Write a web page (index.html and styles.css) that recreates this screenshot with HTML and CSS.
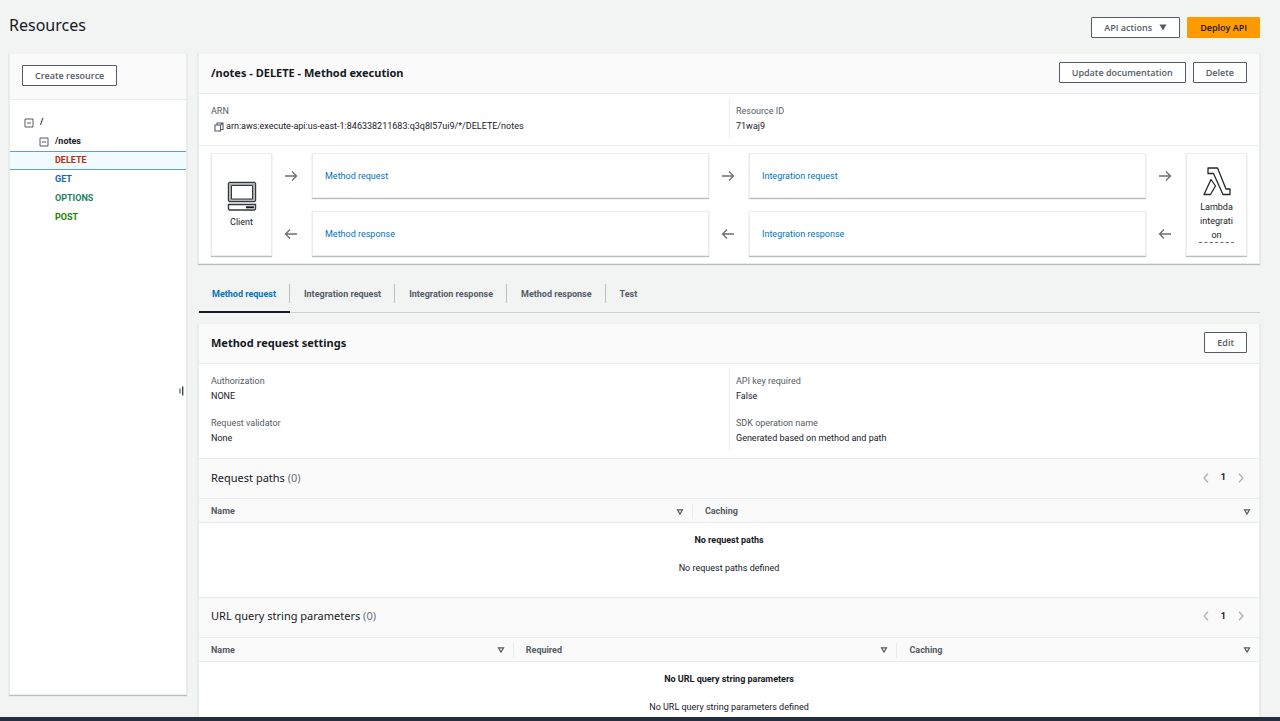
FILE: index.html
```html
<!DOCTYPE html>
<html lang="en">
<head>
<meta charset="utf-8">
<title>Resources</title>
<link rel="stylesheet" href="styles.css">
</head>
<body>
<svg class="defs" aria-hidden="true">
  <symbol id="minus-box" viewBox="0 0 10 10"><path d="M1 1h8v8H1zM3 5h4" fill="none" stroke="#545b64"/></symbol>
  <symbol id="arrow" viewBox="0 0 14 12"><path d="M1 6h11.500M8 1.500L12.500 6 8 10.500" fill="none" stroke="#6b7075" stroke-width="1.300"/></symbol>
  <symbol id="sort" viewBox="0 0 8 8"><path d="M1.500 1.800h5L4 6z" fill="none" stroke="#545b64" stroke-width="1.200"/></symbol>
  <symbol id="chevron" viewBox="0 0 8 10"><path d="M6 .7L2 5l4 4.300" fill="none" stroke="#aab0b5" stroke-width="1.300"/></symbol>
</svg>
<div class="app">
  <header class="page-header">
    <h1>Resources</h1>
    <div class="actions">
      <button class="btn">API actions <svg class="caret" viewBox="0 0 8 7"><path d="M.5.500h7L4 6.500z" fill="#545b64"/></svg></button>
      <button class="btn primary">Deploy API</button>
    </div>
  </header>
  <div class="columns">
    <aside class="card sidebar">
      <div class="sidebar-head"><button class="btn">Create resource</button></div>
      <ul class="tree">
        <li class="root"><button class="toggle" aria-label="Collapse /"><svg><use href="#minus-box"/></svg></button><span>/</span></li>
        <li class="branch"><button class="toggle" aria-label="Collapse /notes"><svg><use href="#minus-box"/></svg></button><span>/notes</span></li>
        <li class="leaf selected"><a href="#delete" class="m-delete">DELETE</a></li>
        <li class="leaf"><a href="#get" class="m-get">GET</a></li>
        <li class="leaf"><a href="#options" class="m-options">OPTIONS</a></li>
        <li class="leaf"><a href="#post" class="m-post">POST</a></li>
      </ul>
      <button class="resizer" aria-label="Resize panel"><svg viewBox="0 0 5 10"><path d="M1 2.500v5" stroke="#33383d"/><path d="M3.700 .5v9" stroke="#33383d" stroke-width="1.300"/></svg></button>
    </aside>
    <main class="content">
      <section class="card">
        <div class="card-head">
          <h2>/notes - DELETE - Method execution</h2>
          <div class="actions"><button class="btn">Update documentation</button><button class="btn">Delete</button></div>
        </div>
        <div class="pairs summary">
          <dl><div><dt>ARN</dt><dd class="arn"><svg viewBox="0 0 10 10"><path d="M1 3h5.500v6H1zM3 3V1h6v6.500H6.500M6.500 3L9 1" fill="none" stroke="#545b64" stroke-width="1.100"/></svg>arn:aws:execute-api:us-east-1:846338211683:q3q8l57ui9/*/DELETE/notes</dd></div></dl>
          <dl><div><dt>Resource ID</dt><dd>71waj9</dd></div></dl>
        </div>
        <div class="flow">
          <div class="box node start">
            <svg class="client" viewBox="0 0 30 30"><path d="M2.500 1.500h25l1 1v17l-1 1h-25l-1-1v-17zM1.500 23.500h27v4.500l-1 1h-25l-1-1z" fill="#fff" stroke="#33383d" stroke-width="1.400"/><path d="M3.200 3.200h23.600v15.600H3.200z" fill="none" stroke="#a5a8ab" stroke-width="1.600"/><path d="M4.500 4.500h21v13.500h-21z" fill="none" stroke="#33383d"/><path d="M19 26.300h8" stroke="#16191f" stroke-width="2"/></svg>
            <span>Client</span>
          </div>
          <svg class="arrow"><use href="#arrow"/></svg>
          <div class="box"><a href="#method-request">Method request</a></div>
          <svg class="arrow"><use href="#arrow"/></svg>
          <div class="box"><a href="#integration-request">Integration request</a></div>
          <svg class="arrow"><use href="#arrow"/></svg>
          <div class="box node end">
            <svg class="lambda" viewBox="0 0 28 29"><path d="M5 1h9.500l8.500 21h4v5.500h-7L10.500 6.500H5zM8 12.500L12.500 19 7.500 27.500H1z" fill="#fff" stroke="#24282d" stroke-width="1.300" stroke-linejoin="round"/></svg>
            <span class="hint">Lambda integration</span>
          </div>
          <svg class="arrow back"><use href="#arrow"/></svg>
          <div class="box"><a href="#method-response">Method response</a></div>
          <svg class="arrow back"><use href="#arrow"/></svg>
          <div class="box"><a href="#integration-response">Integration response</a></div>
          <svg class="arrow back"><use href="#arrow"/></svg>
        </div>
      </section>
      <div class="tabs" role="tablist">
        <button role="tab" aria-selected="true" class="tab active"><span>Method request</span></button>
        <button role="tab" class="tab"><span>Integration request</span></button>
        <button role="tab" class="tab"><span>Integration response</span></button>
        <button role="tab" class="tab"><span>Method response</span></button>
        <button role="tab" class="tab"><span>Test</span></button>
      </div>
      <section class="card">
        <div class="card-head">
          <h2>Method request settings</h2>
          <button class="btn">Edit</button>
        </div>
        <div class="pairs">
          <dl><div><dt>Authorization</dt><dd>NONE</dd></div><div><dt>Request validator</dt><dd>None</dd></div></dl>
          <dl><div><dt>API key required</dt><dd>False</dd></div><div><dt>SDK operation name</dt><dd>Generated based on method and path</dd></div></dl>
        </div>
        <div class="card-head sub">
          <h3>Request paths <span>(0)</span></h3>
          <nav class="pager"><button aria-label="Previous page"><svg><use href="#chevron"/></svg></button><button>1</button><button aria-label="Next page"><svg class="back"><use href="#chevron"/></svg></button></nav>
        </div>
        <table class="two">
          <thead><tr>
            <th><div>Name<svg><use href="#sort"/></svg></div></th>
            <th><div>Caching<svg><use href="#sort"/></svg></div></th>
          </tr></thead>
          <tbody><tr><td colspan="2"><b>No request paths</b><p>No request paths defined</p></td></tr></tbody>
        </table>
        <div class="card-head sub">
          <h3>URL query string parameters <span>(0)</span></h3>
          <nav class="pager"><button aria-label="Previous page"><svg><use href="#chevron"/></svg></button><button>1</button><button aria-label="Next page"><svg class="back"><use href="#chevron"/></svg></button></nav>
        </div>
        <table class="three">
          <thead><tr>
            <th><div>Name<svg><use href="#sort"/></svg></div></th>
            <th><div>Required<svg><use href="#sort"/></svg></div></th>
            <th><div>Caching<svg><use href="#sort"/></svg></div></th>
          </tr></thead>
          <tbody><tr><td colspan="3"><b>No URL query string parameters</b><p>No URL query string parameters defined</p></td></tr></tbody>
        </table>
      </section>
    </main>
  </div>
</div>
<footer class="footer"></footer>
</body>
</html>
```
FILE: styles.css
```css
* { box-sizing: border-box; }
body {
  margin: 0;
  height: 100vh;
  display: flex;
  flex-direction: column;
  overflow: hidden;
  background: #f2f3f3;
  color: #16191f;
  font: 9px/15px Roboto, "Noto Sans", sans-serif;
}
h1, h2, h3, p, dl, dd, ul { margin: 0; padding: 0; }
h1, h2, h3 { font-family: "Noto Sans", "Open Sans", sans-serif; }
button { font: inherit; color: inherit; background: none; border: 0; padding: 0; }
a { color: #0073bb; text-decoration: none; }
svg { display: block; flex: none; }
.defs { position: absolute; width: 0; height: 0; }
.app { flex: 1; min-height: 0; overflow: hidden; display: flex; flex-direction: column; padding: 0 20px 0 9px; }
.footer { height: 4px; flex: none; background: #232f3e; }

.page-header { flex: none; height: 53px; display: flex; align-items: center; justify-content: space-between; padding-top: 1px; }
h1 { font-size: 16px; line-height: 24px; padding-bottom: 4px; font-weight: 400; }
.actions { display: flex; gap: 7px; }
.btn {
  display: flex;
  align-items: center;
  gap: 7px;
  height: 21px;
  padding: 0 12px;
  border: 1px solid #545b64;
  border-radius: 1px;
  background: #fff;
  color: #545b64;
  font-family: "Open Sans", "Noto Sans", sans-serif;
  font-weight: 600;
  white-space: nowrap;
}
.primary { background: #ff9900; border-color: #ff9900; color: #16191f; }
.caret { width: 8px; height: 7px; }

.columns { flex: 1; min-height: 0; display: flex; gap: 11px; }
.card { background: #fff; border: 1px solid #eaeded; border-top-color: #eff1f1; box-shadow: 0 1px 1px #b9bebe; }
.sidebar { position: relative; flex: none; width: 178px; margin-bottom: 22px; }
.sidebar-head { height: 46px; padding: 11px 12px; display: flex; background: #fafafa; border-bottom: 1px solid #eaeded; }
.tree { list-style: none; padding-top: 13px; font-weight: 700; }
.tree li { display: flex; align-items: center; gap: 6px; height: 19px; border: 1px solid transparent; border-width: 1px 0; }
.tree .root { padding-left: 14px; }
.tree .branch { padding-left: 29px; }
.tree .leaf { padding-left: 45px; }
.tree .selected { background: #f1faff; border-color: #5f9fc9; }
.toggle svg { width: 10px; height: 10px; }
.m-delete { color: #ba2e0f; }
.m-get { color: #1166b0; }
.m-options { color: #1d8163; }
.m-post { color: #1d8102; }
.resizer { position: absolute; right: 2px; top: 332px; }
.resizer svg { width: 5px; height: 10px; }

.content { flex: 1; min-width: 0; }
.card-head { display: flex; align-items: center; justify-content: space-between; height: 40px; padding: 0 12px 2px; background: #fafafa; border-bottom: 1px solid #eaeded; }
h2, h3 { font-size: 11px; line-height: 18px; }
h2 { font-weight: 700; }
h3 { font-weight: 400; }
h3 span { color: #687078; }
.sub { height: 41px; border-top: 1px solid #eaeded; }

.pairs { display: grid; grid-template-columns: 1fr 1fr; padding: 5px 12px 7px; }
.pairs dl { display: flex; flex-direction: column; gap: 12px; padding: 5px 0; }
.pairs dl + dl { border-left: 1px solid #eaeded; padding-left: 6px; }
.pairs dt { color: #545b64; }
.summary { padding-bottom: 6px; border-bottom: 1px solid #eaeded; }
.arn { display: flex; align-items: center; gap: 2px; padding-left: 3px; }
.arn svg { width: 10px; height: 10px; }

.flow { display: grid; grid-template-columns: 61px 40px 1fr 40px 1fr 40px 61px; grid-template-rows: 45px 45px; row-gap: 13px; padding: 7px 12px; align-items: center; justify-items: center; }
.box { justify-self: stretch; align-self: stretch; display: flex; align-items: center; padding: 1px 12px 0; border: 1px solid #eaeded; box-shadow: 0 1px 1px #b9bebe; }
.node { grid-row: 1 / 3; flex-direction: column; justify-content: center; gap: 4px; text-align: center; line-height: 14px; }
.start { grid-column: 1; }
.end { grid-column: 7; }
.client { width: 30px; height: 30px; }
.lambda { width: 28px; height: 29px; }
.hint { width: 35px; overflow-wrap: anywhere; border-bottom: 1px dashed #687078; }
.arrow { width: 14px; height: 12px; margin-right: 3px; }
.back { transform: scaleX(-1); }

.tabs { display: flex; margin: 17px 0 10px; padding-left: 1px; border-bottom: 1px solid #cdd1d1; }
.tab { padding: 3px 0 8px; font-weight: 700; color: #545b64; margin-bottom: -1px; border-bottom: 2px solid transparent; }
.tab span { display: block; padding: 3px 13px 1px 14px; border-right: 1px solid #b9bebe; }
.tab:first-child span { padding-left: 13px; }
.tab:last-child span { border-right: 0; }
.tabs .active { color: #0073bb; border-bottom-color: #16191f; }

.pager { display: flex; align-items: center; gap: 11px; margin-right: 2px; font-weight: 700; }
.pager svg { width: 8px; height: 10px; }
table { width: 100%; border-collapse: collapse; table-layout: fixed; }
th { padding: 5px 0 3px; background: #fafafa; border-bottom: 1px solid #eaeded; color: #545b64; text-align: left; }
th div { display: flex; align-items: center; justify-content: space-between; padding: 0 8px 0 12px; }
th + th div { border-left: 1px solid #eaeded; }
th svg { width: 8px; height: 8px; }
.two th:first-child { width: 46.5%; }
.three th:first-child { width: 29.6%; }
.three th:nth-child(2) { width: 36.2%; }
td { height: 74px; padding: 10px 0 0; text-align: center; vertical-align: top; }
td p { margin-top: 13px; }
```
